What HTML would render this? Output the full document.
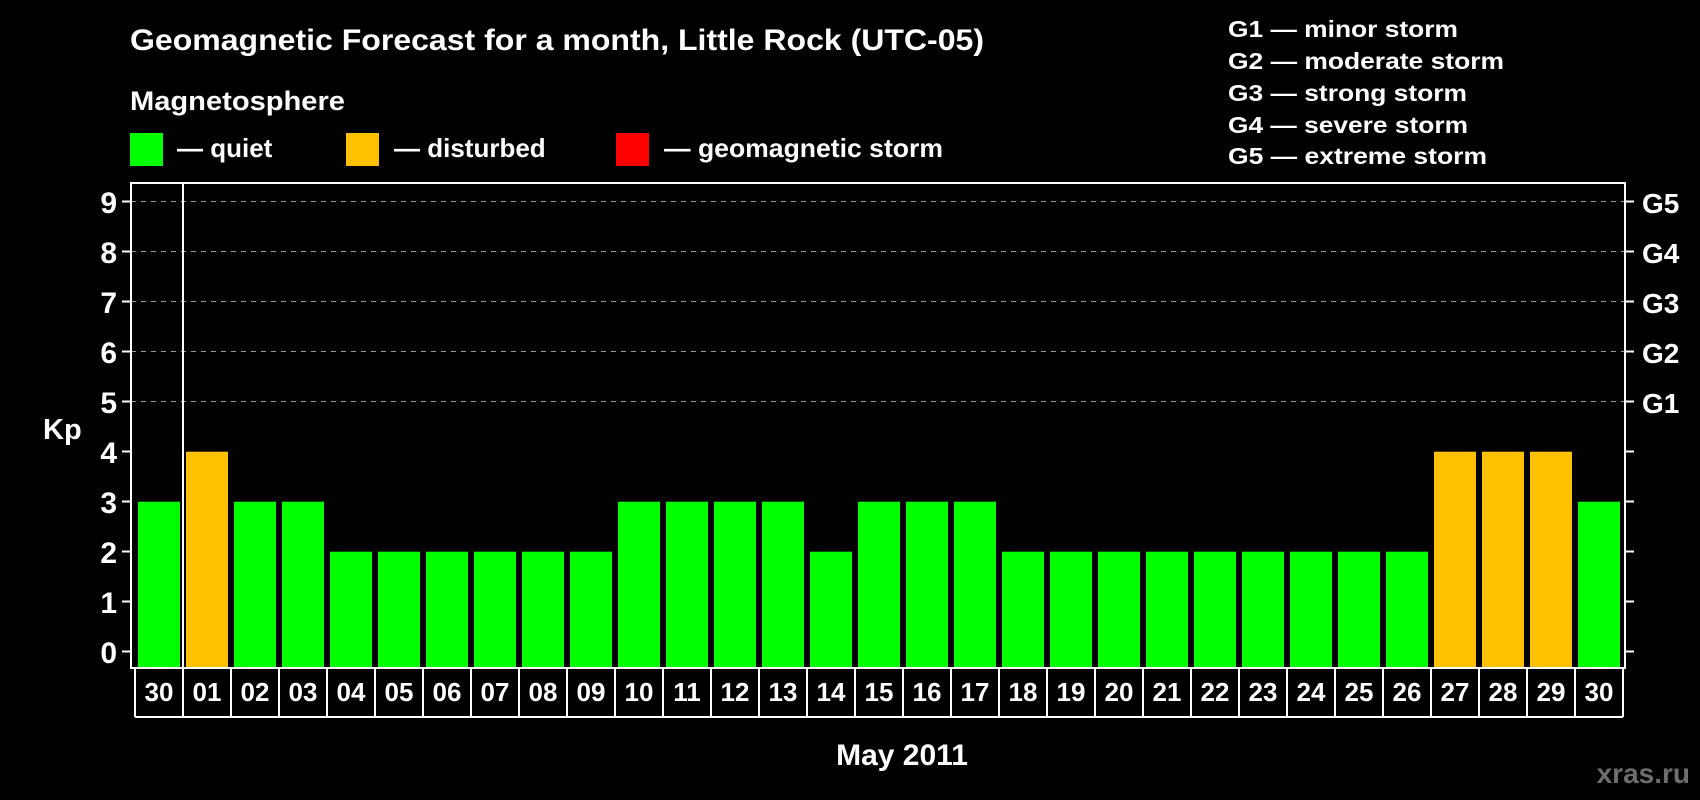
<!DOCTYPE html>
<html><head><meta charset="utf-8"><style>html,body{margin:0;padding:0;background:#000;width:1700px;height:800px;overflow:hidden}svg{display:block}</style></head>
<body>
<svg width="1700" height="800" xmlns="http://www.w3.org/2000/svg" font-family="Liberation Sans, Arial, sans-serif" font-weight="bold" fill="#fff">
<rect width="1700" height="800" fill="#000"/>
<text x="130" y="50" font-size="30" textLength="854" lengthAdjust="spacingAndGlyphs">Geomagnetic Forecast for a month, Little Rock (UTC-05)</text>
<text x="130" y="110" font-size="27" textLength="215" lengthAdjust="spacingAndGlyphs">Magnetosphere</text>
<rect x="130" y="133" width="33" height="33" fill="#00ff00"/>
<text x="177" y="157" font-size="26">— quiet</text>
<rect x="346" y="133" width="33" height="33" fill="#ffc000"/>
<text x="394" y="157" font-size="26">— disturbed</text>
<rect x="616" y="133" width="33" height="33" fill="#ff0000"/>
<text x="664" y="157" font-size="26" textLength="279" lengthAdjust="spacingAndGlyphs">— geomagnetic storm</text>
<g font-size="23">
<text x="1228" y="37" textLength="230" lengthAdjust="spacingAndGlyphs">G1 — minor storm</text>
<text x="1228" y="69" textLength="276" lengthAdjust="spacingAndGlyphs">G2 — moderate storm</text>
<text x="1228" y="101" textLength="239" lengthAdjust="spacingAndGlyphs">G3 — strong storm</text>
<text x="1228" y="133" textLength="240" lengthAdjust="spacingAndGlyphs">G4 — severe storm</text>
<text x="1228" y="164" textLength="259" lengthAdjust="spacingAndGlyphs">G5 — extreme storm</text>
</g>
<g stroke="#999" stroke-width="1" stroke-dasharray="5,5">
<line x1="131" y1="201.5" x2="1625" y2="201.5"/><line x1="131" y1="251.5" x2="1625" y2="251.5"/>
<line x1="131" y1="301.5" x2="1625" y2="301.5"/><line x1="131" y1="351.5" x2="1625" y2="351.5"/>
<line x1="131" y1="401.5" x2="1625" y2="401.5"/>
</g>
<g id="bars">
<rect x="138" y="501.7" width="42" height="166.3" fill="#00ff00"/>
<rect x="186" y="451.7" width="42" height="216.3" fill="#ffc000"/>
<rect x="234" y="501.7" width="42" height="166.3" fill="#00ff00"/>
<rect x="282" y="501.7" width="42" height="166.3" fill="#00ff00"/>
<rect x="330" y="551.7" width="42" height="116.3" fill="#00ff00"/>
<rect x="378" y="551.7" width="42" height="116.3" fill="#00ff00"/>
<rect x="426" y="551.7" width="42" height="116.3" fill="#00ff00"/>
<rect x="474" y="551.7" width="42" height="116.3" fill="#00ff00"/>
<rect x="522" y="551.7" width="42" height="116.3" fill="#00ff00"/>
<rect x="570" y="551.7" width="42" height="116.3" fill="#00ff00"/>
<rect x="618" y="501.7" width="42" height="166.3" fill="#00ff00"/>
<rect x="666" y="501.7" width="42" height="166.3" fill="#00ff00"/>
<rect x="714" y="501.7" width="42" height="166.3" fill="#00ff00"/>
<rect x="762" y="501.7" width="42" height="166.3" fill="#00ff00"/>
<rect x="810" y="551.7" width="42" height="116.3" fill="#00ff00"/>
<rect x="858" y="501.7" width="42" height="166.3" fill="#00ff00"/>
<rect x="906" y="501.7" width="42" height="166.3" fill="#00ff00"/>
<rect x="954" y="501.7" width="42" height="166.3" fill="#00ff00"/>
<rect x="1002" y="551.7" width="42" height="116.3" fill="#00ff00"/>
<rect x="1050" y="551.7" width="42" height="116.3" fill="#00ff00"/>
<rect x="1098" y="551.7" width="42" height="116.3" fill="#00ff00"/>
<rect x="1146" y="551.7" width="42" height="116.3" fill="#00ff00"/>
<rect x="1194" y="551.7" width="42" height="116.3" fill="#00ff00"/>
<rect x="1242" y="551.7" width="42" height="116.3" fill="#00ff00"/>
<rect x="1290" y="551.7" width="42" height="116.3" fill="#00ff00"/>
<rect x="1338" y="551.7" width="42" height="116.3" fill="#00ff00"/>
<rect x="1386" y="551.7" width="42" height="116.3" fill="#00ff00"/>
<rect x="1434" y="451.7" width="42" height="216.3" fill="#ffc000"/>
<rect x="1482" y="451.7" width="42" height="216.3" fill="#ffc000"/>
<rect x="1530" y="451.7" width="42" height="216.3" fill="#ffc000"/>
<rect x="1578" y="501.7" width="42" height="166.3" fill="#00ff00"/>
</g>
<g stroke="#fff" stroke-width="2" fill="none">
<rect x="131" y="183" width="1494" height="485"/>
<line x1="183" y1="183" x2="183" y2="668"/>
<path d="M122 201.5h9M122 251.5h9M122 301.5h9M122 351.5h9M122 401.5h9M122 451.5h9M122 501.5h9M122 551.5h9M122 601.5h9M122 651.5h9"/>
<path d="M1625 201.5h9M1625 251.5h9M1625 301.5h9M1625 351.5h9M1625 401.5h9M1625 451.5h9M1625 501.5h9M1625 551.5h9M1625 601.5h9M1625 651.5h9"/>
<path d="M135 669v48M183 669v48M231 669v48M279 669v48M327 669v48M375 669v48M423 669v48M471 669v48M519 669v48M567 669v48M615 669v48M663 669v48M711 669v48M759 669v48M807 669v48M855 669v48M903 669v48M951 669v48M999 669v48M1047 669v48M1095 669v48M1143 669v48M1191 669v48M1239 669v48M1287 669v48M1335 669v48M1383 669v48M1431 669v48M1479 669v48M1527 669v48M1575 669v48M1623 669v48M135 717H1623"/>
</g>
<g font-size="30" text-anchor="end">
<text x="117" y="213">9</text><text x="117" y="263">8</text><text x="117" y="313">7</text><text x="117" y="363">6</text><text x="117" y="413">5</text><text x="117" y="463">4</text><text x="117" y="513">3</text><text x="117" y="563">2</text><text x="117" y="613">1</text><text x="117" y="663">0</text>
</g>
<text x="43" y="439" font-size="29">Kp</text>
<g font-size="28">
<text x="1642" y="213">G5</text><text x="1642" y="263">G4</text><text x="1642" y="313">G3</text><text x="1642" y="363">G2</text><text x="1642" y="413">G1</text>
</g>
<g font-size="26" text-anchor="middle">
<text x="159" y="701">30</text><text x="207" y="701">01</text><text x="255" y="701">02</text><text x="303" y="701">03</text><text x="351" y="701">04</text><text x="399" y="701">05</text><text x="447" y="701">06</text><text x="495" y="701">07</text><text x="543" y="701">08</text><text x="591" y="701">09</text><text x="639" y="701">10</text><text x="687" y="701">11</text><text x="735" y="701">12</text><text x="783" y="701">13</text><text x="831" y="701">14</text><text x="879" y="701">15</text><text x="927" y="701">16</text><text x="975" y="701">17</text><text x="1023" y="701">18</text><text x="1071" y="701">19</text><text x="1119" y="701">20</text><text x="1167" y="701">21</text><text x="1215" y="701">22</text><text x="1263" y="701">23</text><text x="1311" y="701">24</text><text x="1359" y="701">25</text><text x="1407" y="701">26</text><text x="1455" y="701">27</text><text x="1503" y="701">28</text><text x="1551" y="701">29</text><text x="1599" y="701">30</text>
</g>
<text x="902" y="765" font-size="30" text-anchor="middle">May 2011</text>
<text x="1690" y="783" font-size="28" text-anchor="end" fill="#6e6e6e">xras.ru</text>
</svg>
</body></html>
